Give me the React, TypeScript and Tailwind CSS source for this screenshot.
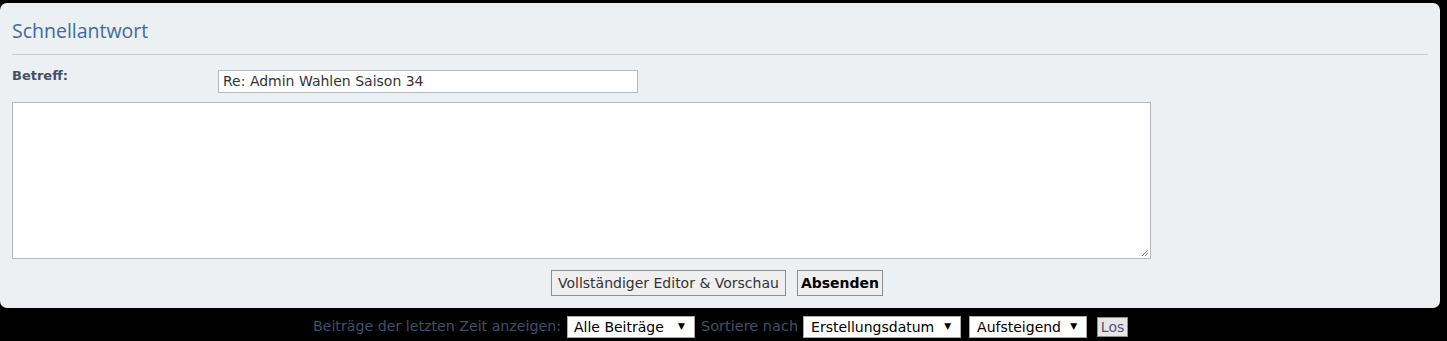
export default function App() {
  return (
    <div className="w-[1447px] h-[341px] bg-black overflow-hidden" style={{ fontFamily: '"DejaVu Sans", Verdana, sans-serif' }}>
      <div className="pt-[3px] pr-[7px]">
        <div className="h-[305px] bg-[#ecf0f3] rounded-[7px] px-[12px] pt-[18px]">
          {/* Title */}
          <h3 className="text-[19.5px] leading-[20px] text-[#3d6ba0] pb-[13px] border-b border-[#cccccc]" style={{ fontFamily: '"Open Sans", "DejaVu Sans", sans-serif' }}>
            Schnellantwort
          </h3>

          {/* Subject */}
          <div className="flex items-start mt-[13px]">
            <label className="w-[206px] text-[13px] font-bold text-[#425067] leading-[16px]">Betreff:</label>
            <div className="w-[420px] h-[23px] bg-white border border-[#b4bac0] px-[4px] flex items-center text-[14px] text-[#333333] mt-[2px]">
              Re: Admin Wahlen Saison 34
            </div>
          </div>

          {/* Message */}
          <div className="relative mt-[9px] w-[1139px] h-[157px] bg-white border border-[#b4bac0]">
            <svg className="absolute right-[1px] bottom-[1px]" width="9" height="9" viewBox="0 0 9 9">
              <path d="M8 2 L2 8 M8 5 L5 8" stroke="#8a8a8a" strokeWidth="1" />
            </svg>
          </div>

          {/* Buttons */}
          <div className="flex justify-center gap-[11px] mt-[11px] pr-[6px]">
            <button className="h-[26px] px-[6px] bg-[#efefef] border border-[#8d8d8d] text-[14px] text-[#333333] leading-none">
              Vollständiger Editor &amp; Vorschau
            </button>
            <button className="h-[26px] px-[3px] bg-[#efefef] border border-[#8d8d8d] text-[14px] font-bold text-black leading-none">
              Absenden
            </button>
          </div>
        </div>
      </div>

      {/* Sort bar */}
      <div className="flex justify-center items-center mt-[8px] pr-[6px] text-[14px]">
        <span className="text-[14.2px] text-[#40506a]">Beiträge der letzten Zeit anzeigen:</span>
        <div className="ml-[6px] w-[128px] h-[22px] bg-white border border-[#a9a9a9] flex items-center justify-between pl-[6px] pr-[9px] text-black">
          <span>Alle Beiträge</span>
          <span className="text-[9px]">▼</span>
        </div>
        <span className="ml-[6px] text-[14.5px] text-[#40506a]">Sortiere nach</span>
        <div className="ml-[5px] w-[158px] h-[22px] bg-white border border-[#a9a9a9] flex items-center justify-between pl-[7px] pr-[9px] text-black">
          <span>Erstellungsdatum</span>
          <span className="text-[9px]">▼</span>
        </div>
        <div className="ml-[8px] w-[118px] h-[22px] bg-white border border-[#a9a9a9] flex items-center justify-between pl-[7px] pr-[9px] text-black">
          <span>Aufsteigend</span>
          <span className="text-[9px]">▼</span>
        </div>
        <button className="ml-[10px] h-[20px] w-[31px] bg-[#e6e6e6] border border-[#8d8d8d] text-[14px] leading-none text-[#5a4e78]">
          Los
        </button>
      </div>
    </div>
  );
}
